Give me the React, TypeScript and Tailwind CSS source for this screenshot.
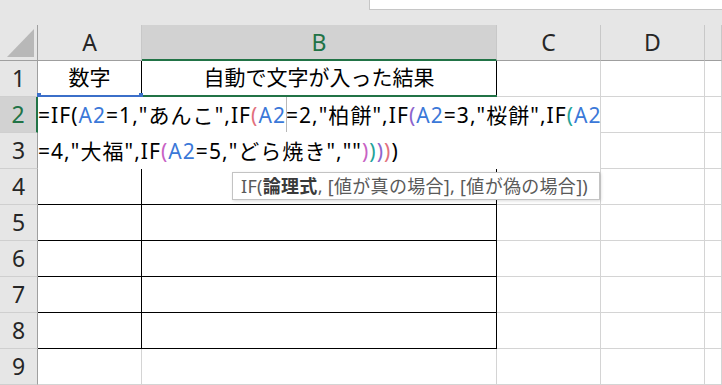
import React from "react";

const HEAD =
  "flex items-center justify-center bg-[#e6e6e6] border-r border-b border-r-[#c8c8c8] border-b-[#9f9f9f] text-[23px] text-[#262626]";
const HEAD_SEL =
  "flex items-center justify-center bg-[#d2d2d2] border-r border-b-2 border-r-[#c8c8c8] border-b-[#217346] text-[23px] text-[#217346]";
const ROWHEAD =
  "flex items-center justify-center bg-[#e6e6e6] border-r border-b border-r-[#9f9f9f] border-b-[#cfcfcf] text-[23px] text-[#262626]";
const ROWHEAD_SEL =
  "flex items-center justify-center bg-[#d2d2d2] border-r-2 border-b border-r-[#217346] border-b-[#cfcfcf] text-[23px] text-[#217346]";
const CELL = "bg-white border-r border-b border-[#d4d4d4]";
const BOXED = "bg-white border-r border-b border-black";

const BLUE = "text-[#3b78d8]";

function Formula() {
  return (
    <div className="flex-1 text-[21px] leading-[36px] text-black tracking-[1.05px] whitespace-nowrap">
      <div>
        =IF(<span className={BLUE}>A2</span>=1,"あんこ",IF
        <span className="text-[#e2707c]">(</span>
        <span className={BLUE}>A2</span>
        <span className="relative">
          <span className="absolute left-0 -top-[4px] w-px h-[35px] bg-[#b8b8b8]" />
        </span>
        =2,"柏餅",IF<span className="text-[#8e64cc]">(</span>
        <span className={BLUE}>A2</span>=3,"桜餅",IF
        <span className="text-[#1fa39a]">(</span>
        <span className={BLUE}>A2</span>
      </div>
      <div>
        =4,"大福",IF<span className="text-[#c862c4]">(</span>
        <span className={BLUE}>A2</span>=5,"どら焼き",""
        <span className="text-[#c862c4]">)</span>
        <span className="text-[#1fa39a]">)</span>
        <span className="text-[#8e64cc]">)</span>
        <span className="text-[#e2707c]">)</span>)
      </div>
    </div>
  );
}

export default function App() {
  const plainRow = (n: number) => (
    <React.Fragment key={n}>
      <div className={ROWHEAD}>{n}</div>
      <div className={n <= 8 ? BOXED : CELL} />
      <div className={n <= 8 ? BOXED : CELL} />
      <div className={CELL} />
      <div className={CELL} />
      <div className={CELL} />
    </React.Fragment>
  );

  return (
    <div
      className="relative w-[722px] h-[385px] overflow-hidden bg-white"
      style={{ fontFamily: '"Noto Sans", "Noto Sans CJK JP", sans-serif' }}
    >
      {/* ribbon / formula bar edge */}
      <div className="h-[25px] bg-[#e6e6e6] flex justify-end">
        <div className="w-[353px] h-[10px] bg-white border-l border-b border-[#c6c6c6]" />
      </div>

      <div className="grid grid-cols-[38px_104px_355px_104px_104px_1fr] grid-rows-[repeat(10,36px)]">
        {/* column headers */}
        <div className="bg-[#e6e6e6] border-r border-b border-r-[#9f9f9f] border-b-[#9f9f9f]">
          <svg width="37" height="35" viewBox="0 0 37 35">
            <polygon points="7,32 34,4 34,32" fill="#b8b8b8" />
          </svg>
        </div>
        <div className={HEAD}>A</div>
        <div className={HEAD_SEL}>B</div>
        <div className={HEAD}>C</div>
        <div className={HEAD}>D</div>
        <div className={HEAD} />

        {/* row 1 */}
        <div className={ROWHEAD}>1</div>
        <div className={`${BOXED} flex items-center justify-center text-[21px] pb-[2px]`}>数字</div>
        <div className={`${BOXED} flex items-center justify-center text-[21px] pb-[2px]`}>
          自動で文字が入った結果
        </div>
        <div className={CELL} />
        <div className={CELL} />
        <div className={CELL} />

        {/* rows 2-3 with in-cell editor */}
        <div className={ROWHEAD_SEL}>2</div>
        <div className="col-span-3 row-span-2 bg-white border-r border-[#d4d4d4] flex flex-col">
          <Formula />
          <div className="flex h-px">
            <div className="w-[459px] bg-black" />
            <div className="flex-1 bg-[#d4d4d4]" />
          </div>
        </div>
        <div className={CELL} />
        <div className={CELL} />
        <div className={ROWHEAD}>3</div>
        <div className={CELL} />
        <div className={CELL} />

        {[4, 5, 6, 7, 8, 9].map(plainRow)}
      </div>

      {/* reference highlight on A2 and active cell edge */}
      <div className="absolute left-[40px] top-[95px] w-[100px] h-[2px] bg-[#3b6fc9]" />
      <div className="absolute left-[37px] top-[93px] w-[4px] h-[4px] bg-[#3b6fc9]" />
      <div className="absolute left-[139px] top-[93px] w-[4px] h-[4px] bg-[#3b6fc9]" />
      <div className="absolute left-[143px] top-[95px] w-[354px] h-[2px] bg-[#217346]" />

      {/* function tooltip */}
      <div className="absolute left-[232px] top-[172px] w-[368px] h-[28px] bg-white border border-[#c3c3c3] shadow-[1px_1px_3px_rgba(0,0,0,0.15)] pl-[8px] text-[18px] leading-[26px] tracking-[0.3px] text-[#5a5a5a] whitespace-nowrap">
        IF(<span className="font-bold text-[#3a3a3a]">論理式</span>, [値が真の場合], [値が偽の場合])
      </div>
    </div>
  );
}
